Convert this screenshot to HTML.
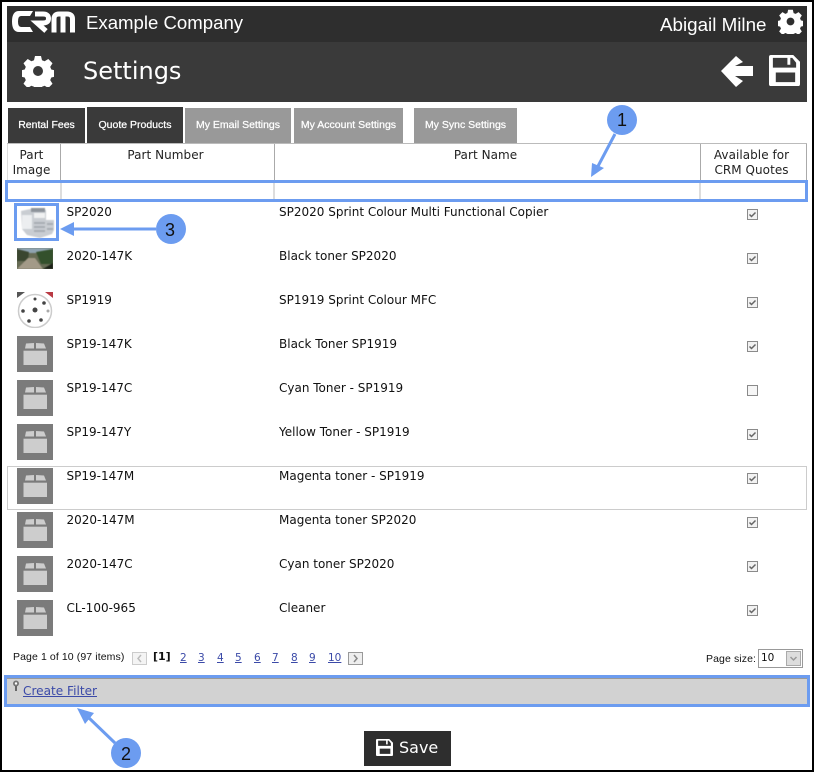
<!DOCTYPE html>
<html><head><meta charset="utf-8"><style>
*{box-sizing:border-box}
html,body{margin:0;padding:0;background:#fff}
#p{position:relative;width:814px;height:772px;overflow:hidden;background:#fff;font-family:"DejaVu Sans",sans-serif;font-size:12px;color:#111}
#p div,#p a,#p svg{position:absolute}
.t{white-space:nowrap;line-height:14px}
.tab{height:35px;top:108px;color:#fff;font-size:10.500px;line-height:35px;text-align:center;background:#999;font-family:"Liberation Sans",sans-serif;-webkit-text-stroke:.25px #fff;white-space:nowrap}
.d{background:#3a3a3a}
.h{text-align:center;line-height:15px;color:#222;top:148px;font-size:12px;letter-spacing:.05px}
.v{width:1px;background:#aaa;top:144px;height:36px}
.g{width:2px;background:#ddd;top:183px;height:16px}
.pg{top:651px;font-size:10.500px;color:#3b4aa8;text-decoration:underline;line-height:14px}
</style></head><body><div id="p">
<svg width="0" height="0" style="position:absolute"><defs>
<symbol id="gear" viewBox="0 0 32 32"><path fill="#fff" fill-rule="evenodd" d="M13 1h6l1 4.200 2.600 1.100 3.700-2.300 4.200 4.200-2.300 3.700 1.100 2.600 4.200 1v6l-4.200 1-1.100 2.600 2.300 3.700-4.200 4.200-3.700-2.300-2.600 1.100-1 4.200h-6l-1-4.200-2.600-1.100-3.700 2.300-4.200-4.200 2.300-3.700-1.100-2.600-4.200-1v-6l4.200-1 1.100-2.600-2.300-3.700 4.200-4.200 3.700 2.300 2.600-1.100zM16 11a5 5 0 1 0 0 10 5 5 0 0 0 0-10z"/></symbol>
<symbol id="floppy" viewBox="0 0 32 32"><path fill="#fff" fill-rule="evenodd" d="M2 0h23l7 7v23a2 2 0 0 1-2 2H2a2 2 0 0 1-2-2V2a2 2 0 0 1 2-2zM4 3v10h24V8l-4-5h-2v7h-3V3zM7 18v10h20V18z"/></symbol>
<symbol id="box" viewBox="0 0 36 36"><rect width="36" height="36" fill="#7b7b7b"/><rect x="6.500" y="14.700" width="23.500" height="14.300" fill="#cdcdcd"/><path fill="#cdcdcd" d="M8 12.500l1-5 8-.5v5.500zM19 7l8 .5 2 5H19z"/></symbol>
<symbol id="chk" viewBox="0 0 11 11"><rect x=".5" y=".5" width="10" height="10" fill="#f2f2f2" stroke="#8a8a8a"/><path d="M2.500 5.500l2 2 4-4" fill="none" stroke="#666" stroke-width="1.500"/></symbol>
</defs></svg>

<div style="left:0;top:0;width:814px;height:2px;background:#000"></div>
<div style="left:0;top:770px;width:814px;height:2px;background:#000"></div>
<div style="left:0;top:0;width:2px;height:772px;background:#000"></div>
<div style="left:812px;top:0;width:2px;height:772px;background:#000"></div>

<div style="left:7px;top:6px;width:800px;height:36px;background:#2e2e2e"></div>
<div style="left:7px;top:42px;width:800px;height:60px;background:#3a3a3a"></div>
<svg style="left:12px;top:11px" width="63" height="22" viewBox="0 0 63 22"><path fill="#fff" d="M7 0h14l-3 5H9q-3 0-3 5.500T9 16h9l3 5H7Q0 21 0 10.500T7 0z"/><g fill="none" stroke="#fff" stroke-width="5"><path d="M23 3h8q5.500 0 5.500 4.500T31 12h-6l9 8"/><path d="M42 21.500V8q0-5 5-5h8q5.500 0 5.500 5v13.500M51 5v16.500"/></g></svg>
<div class="t" style="left:86px;top:12px;font-size:18.600px;line-height:22px;color:#fff;font-family:'Liberation Sans',sans-serif">Example Company</div>
<div class="t" style="left:660px;top:14px;font-size:18.800px;line-height:22px;color:#fff;font-family:'Liberation Sans',sans-serif">Abigail Milne</div>
<svg style="left:778px;top:9px" width="25" height="25"><use href="#gear"/></svg>
<svg style="left:22px;top:55px" width="32" height="32"><use href="#gear"/></svg>
<div class="t" style="left:83px;top:55px;font-size:24px;line-height:32px;color:#fff">Settings</div>
<svg style="left:715px;top:48px" width="44" height="44" viewBox="0 0 44 44"><path fill="#fff" d="M6 23L21 8l7 6-8 4h18v10H20l8 5-7 6z"/></svg>
<svg style="left:769px;top:55px" width="31" height="31"><use href="#floppy"/></svg>

<div class="tab d" style="left:8px;width:77px">Rental Fees</div>
<div class="tab d" style="left:87px;width:96px;top:107px;height:37px;line-height:37px">Quote Products</div>
<div class="tab" style="left:185px;width:106px">My Email Settings</div>
<div class="tab" style="left:294px;width:109px">My Account Settings</div>
<div class="tab" style="left:414px;width:103px">My Sync Settings</div>

<div style="left:7px;top:143px;width:800px;height:1px;background:#bbb"></div>
<div class="v" style="left:7px;background:#ddd"></div><div class="v" style="left:60px"></div><div class="v" style="left:274px"></div><div class="v" style="left:700px"></div><div class="v" style="left:806px"></div>
<div class="h" style="left:5px;width:53px">Part<br>Image</div>
<div class="h" style="left:59px;width:213px">Part Number</div>
<div class="h" style="left:273px;width:425px">Part Name</div>
<div class="h" style="left:699px;width:105px">Available for<br>CRM Quotes</div>

<div style="left:5px;top:180px;width:803px;height:22px;border:3px solid #6c9cf0"></div>
<div class="g" style="left:60px"></div><div class="g" style="left:273px"></div><div class="g" style="left:699px"></div>

<div style="left:7px;top:466px;width:800px;height:44px;border:1px solid #ccc"></div>

<!-- rows -->
<div class="t" style="left:66.500px;top:205px">SP2020</div><div class="t" style="left:279px;top:205px">SP2020 Sprint Colour Multi Functional Copier</div>
<div class="t" style="left:66.500px;top:249px">2020-147K</div><div class="t" style="left:279px;top:249px">Black toner SP2020</div>
<div class="t" style="left:66.500px;top:293px">SP1919</div><div class="t" style="left:279px;top:293px">SP1919 Sprint Colour MFC</div>
<div class="t" style="left:66.500px;top:337px">SP19-147K</div><div class="t" style="left:279px;top:337px">Black Toner SP1919</div>
<div class="t" style="left:66.500px;top:381px">SP19-147C</div><div class="t" style="left:279px;top:381px">Cyan Toner - SP1919</div>
<div class="t" style="left:66.500px;top:425px">SP19-147Y</div><div class="t" style="left:279px;top:425px">Yellow Toner - SP1919</div>
<div class="t" style="left:66.500px;top:469px">SP19-147M</div><div class="t" style="left:279px;top:469px">Magenta toner - SP1919</div>
<div class="t" style="left:66.500px;top:513px">2020-147M</div><div class="t" style="left:279px;top:513px">Magenta toner SP2020</div>
<div class="t" style="left:66.500px;top:557px">2020-147C</div><div class="t" style="left:279px;top:557px">Cyan toner SP2020</div>
<div class="t" style="left:66.500px;top:601px">CL-100-965</div><div class="t" style="left:279px;top:601px">Cleaner</div>

<!-- thumbs -->
<svg style="left:14px;top:203px" width="45" height="38" viewBox="0 0 45 38"><rect x="1.500" y="1.500" width="42" height="35" fill="#fff" stroke="#6c9cf0" stroke-width="3"/><g style="filter:blur(.5px)"><path fill="#c9cdd2" d="M7 8l14-3 11 2v10h8v10l-2 4-12 4-13-3-5-6z"/><path fill="#eceef0" d="M8 12h10v14H8z"/><path fill="#8d939a" d="M17 5h14v4H17z"/><path fill="#f0f1f2" d="M20 10h11v5H20z"/><path fill="#a8adb3" d="M20 19h11v2H20zM20 23h11v2H20zM20 27h11v2H20zM33 20h6v2h-6zM33 25h6v2h-6z"/></g></svg>
<svg style="left:17px;top:248px" width="36" height="21" viewBox="0 0 36 21"><rect width="36" height="21" fill="#666b54"/><g style="filter:blur(.6px)"><rect width="36" height="5" fill="#8fa3b0"/><path fill="#3a4630" d="M0 1l12 3-1 9H0z"/><path fill="#33502c" d="M19 4l17-3v15H24z"/><path fill="#a39a88" d="M0 21l11-11h7l8 11z"/><path fill="#1c2118" d="M26 21l10-6v6z"/></g></svg>
<svg style="left:17px;top:292px" width="36" height="36" viewBox="0 0 36 36"><circle cx="18" cy="19" r="16.500" fill="#fff" stroke="#ccc" stroke-width="1.500"/><path fill="#555" d="M0 0h8L0 6z"/><path fill="#b93a44" d="M36 0h-8l8 6z"/><g fill="#444"><circle cx="18" cy="18" r="2.500"/><circle cx="18" cy="7" r="1.500"/><circle cx="27" cy="11" r="1.800"/><circle cx="6" cy="19" r="1.800"/><circle cx="12" cy="29" r="1.800"/><circle cx="24" cy="28" r="1.800"/></g><circle cx="31" cy="19" r="1.500" fill="#aaa"/></svg>
<svg style="left:17px;top:336px" width="36" height="36"><use href="#box"/></svg>
<svg style="left:17px;top:380px" width="36" height="36"><use href="#box"/></svg>
<svg style="left:17px;top:424px" width="36" height="36"><use href="#box"/></svg>
<svg style="left:17px;top:468px" width="36" height="36"><use href="#box"/></svg>
<svg style="left:17px;top:512px" width="36" height="36"><use href="#box"/></svg>
<svg style="left:17px;top:556px" width="36" height="36"><use href="#box"/></svg>
<svg style="left:17px;top:600px" width="36" height="36"><use href="#box"/></svg>

<!-- checks -->
<svg style="left:747px;top:209px" width="11" height="11"><use href="#chk"/></svg>
<svg style="left:747px;top:253px" width="11" height="11"><use href="#chk"/></svg>
<svg style="left:747px;top:297px" width="11" height="11"><use href="#chk"/></svg>
<svg style="left:747px;top:341px" width="11" height="11"><use href="#chk"/></svg>
<div style="left:747px;top:385px;width:11px;height:11px;border:1px solid #8a8a8a;background:#f6f6f6"></div>
<svg style="left:747px;top:429px" width="11" height="11"><use href="#chk"/></svg>
<svg style="left:747px;top:473px" width="11" height="11"><use href="#chk"/></svg>
<svg style="left:747px;top:517px" width="11" height="11"><use href="#chk"/></svg>
<svg style="left:747px;top:561px" width="11" height="11"><use href="#chk"/></svg>
<svg style="left:747px;top:605px" width="11" height="11"><use href="#chk"/></svg>

<!-- pager -->
<div class="t" style="left:13px;top:650px;font-size:10.500px;font-family:'Liberation Sans',sans-serif;letter-spacing:.1px">Page 1 of 10 (97 items)</div>
<div style="left:132px;top:652px;width:15px;height:13px;border:1px solid #ccc;background:#f4f4f4"></div>
<div style="left:153px;top:650px;font-size:11px;font-weight:bold;line-height:14px">[1]</div>
<div class="pg" style="left:180px">2</div><div class="pg" style="left:198px">3</div><div class="pg" style="left:217px">4</div><div class="pg" style="left:235px">5</div><div class="pg" style="left:254px">6</div><div class="pg" style="left:272px">7</div><div class="pg" style="left:291px">8</div><div class="pg" style="left:309px">9</div><div class="pg" style="left:328px">10</div>
<svg style="left:132px;top:652px" width="15" height="13"><path d="M9 3L6 6.500 9 10" fill="none" stroke="#bbb" stroke-width="1.500"/></svg>
<div style="left:348px;top:652px;width:15px;height:13px;border:1px solid #999;background:#eee"></div>
<svg style="left:348px;top:652px" width="15" height="13"><path d="M6 3l3 3.500L6 10" fill="none" stroke="#888" stroke-width="1.500"/></svg>
<div class="t" style="left:706px;top:652px;font-size:10.500px;font-family:'Liberation Sans',sans-serif;letter-spacing:.1px">Page size:</div>
<div style="left:758px;top:649px;width:45px;height:19px;border:1px solid #999"></div>
<div class="t" style="left:761px;top:651px;font-size:10.500px">10</div>
<div style="left:786px;top:651px;width:15px;height:15px;border:1px solid #aaa;background:#ddd"></div>
<svg style="left:786px;top:651px" width="15" height="15"><path d="M4.500 6l3 3 3-3" fill="none" stroke="#999" stroke-width="1.500"/></svg>

<!-- filter -->
<div style="left:4px;top:675px;width:806px;height:32px;background:#d2d2d2;border:3px solid #6c9cf0"></div>
<div style="left:7px;top:678px;width:800px;height:1px;background:#999"></div>
<svg style="left:12px;top:680px" width="8" height="12" viewBox="0 0 8 12"><circle cx="4" cy="3.500" r="3" fill="#777"/><circle cx="4" cy="3.500" r="1.200" fill="#fff"/><rect x="3" y="6" width="2" height="5" fill="#666"/></svg>
<a class="t" href="#" style="left:23px;top:684px;color:#3b4aa8;text-decoration:underline;font-size:12.100px">Create Filter</a>

<!-- save -->
<div style="left:364px;top:731px;width:87px;height:35px;background:#2e2e2e"></div>
<svg style="left:376px;top:739px" width="17" height="17"><use href="#floppy"/></svg>
<div class="t" style="left:399px;top:738px;font-size:16px;line-height:20px;color:#fff">Save</div>

<!-- annotations -->
<svg style="left:0;top:0;pointer-events:none" width="814" height="772" viewBox="0 0 814 772">
<g stroke="#6c9cf0" stroke-width="3" fill="#6c9cf0">
<path d="M615 134L596 170"/><path stroke="none" d="M591 177l1-14 12 5z"/>
<path d="M156 229H72"/><path stroke="none" d="M60 229l14-7v14z"/>
<path d="M115 743L88 717"/><path stroke="none" d="M77 708l17 5-9 11z"/>
</g>
<circle cx="622" cy="120" r="15" fill="#6c9cf0"/><circle cx="171" cy="229" r="15" fill="#6c9cf0"/><circle cx="126" cy="753" r="15" fill="#6c9cf0"/>
<g font-family="Liberation Sans,sans-serif" font-size="18" fill="#111" text-anchor="middle"><text x="622" y="126">1</text><text x="170" y="236">3</text><text x="126" y="760">2</text></g>
</svg>
</div></body></html>
